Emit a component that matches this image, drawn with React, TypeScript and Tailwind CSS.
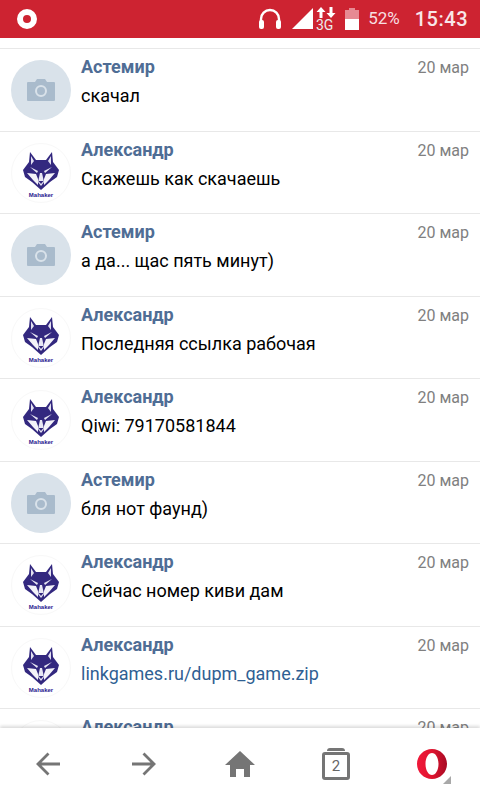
const messages = [
  { name: "Астемир", text: "скачал", wolf: false },
  { name: "Александр", text: "Скажешь как скачаешь", wolf: true },
  { name: "Астемир", text: "а да... щас пять минут)", wolf: false },
  { name: "Александр", text: "Последняя ссылка рабочая", wolf: true },
  { name: "Александр", text: "Qiwi: 79170581844", wolf: true },
  { name: "Астемир", text: "бля нот фаунд)", wolf: false },
  { name: "Александр", text: "Сейчас номер киви дам", wolf: true },
  { name: "Александр", text: "linkgames.ru/dupm_game.zip", wolf: true, link: true },
  { name: "Александр", text: "", wolf: true },
];

const CameraAvatar = () => (
  <div className="w-[60px] h-[60px] rounded-full bg-[#d9e2ea] flex items-center justify-center shrink-0">
    <svg width="30" height="24" viewBox="0 0 30 24">
      <path
        d="M2 4h7l2-3h8l2 3h7a1 1 0 0 1 1 1v17a1 1 0 0 1-1 1H2a1 1 0 0 1-1-1V5a1 1 0 0 1 1-1z"
        fill="#a9bbcc"
      />
      <circle cx="15" cy="13" r="5" fill="none" stroke="#d9e2ea" strokeWidth="2" />
    </svg>
  </div>
);

const WolfAvatar = () => (
  <div className="w-[60px] h-[60px] rounded-full bg-white border border-[#f8f8f8] flex flex-col items-center shrink-0 pt-[8px]">
    <svg width="36" height="38" viewBox="0 0 36 38">
      {/* head */}
      <path d="M7 0l6 8h10l6-8 1 10 6 8-2 7-7 5-9 8-9-8-7-5-2-7 6-8z" fill="#33287f" />
      {/* ears */}
      <path d="M8 4l3 5-3 4zM28 4l-3 5 3 4z" fill="#e2e0f0" />
      {/* brows */}
      <path d="M7 15l8 4-1 2zM29 15l-8 4 1 2z" fill="#e9e8f4" />
      {/* cheeks */}
      <path d="M4 21l9 1 2 5v6l-5-5zM32 21l-9 1-2 5v6l5-5z" fill="#f4f3f9" />
      {/* muzzle */}
      <path d="M17 21h2l2 9-3 4-3-4z" fill="#e9e8f4" />
      <path d="M15.500 29h5l-2.500 3z" fill="#33287f" />
    </svg>
    <span className="text-[6px] leading-[7px] mt-[2px] font-bold text-[#2a2090] font-['Liberation_Sans',sans-serif]">
      Mahaker
    </span>
  </div>
);

const Message = ({ item }: { item: (typeof messages)[number] }) => (
  <div className="h-[82.5px] shrink-0 flex gap-[10px] pl-[11px] pr-[11px] pt-[11px] border-b border-[#e8e8e8]">
    {item.wolf ? <WolfAvatar /> : <CameraAvatar />}
    <div className="flex-1 min-w-0">
      <div className="flex justify-between items-start">
        <span className="text-[18px] leading-[13px] font-bold text-[#4f6d95]">{item.name}</span>
        <span className="text-[16px] leading-[16px] text-[#808080]">20 мар</span>
      </div>
      <p className={`text-[18px] leading-[20px] mt-[10px] ${item.link ? "text-[#2f5f93]" : "text-black"}`}>
        {item.text}
      </p>
    </div>
  </div>
);

export default function App() {
  return (
    <div className="w-[480px] h-[800px] flex flex-col overflow-hidden bg-white font-['Roboto',sans-serif]">
      {/* status bar */}
      <div className="h-[38px] shrink-0 bg-[#cd2331] flex items-center pl-[17px] pr-[12px] text-white">
        <div className="w-[20px] h-[20px] rounded-full border-[6px] border-white" />
        <div className="flex-1" />
        <svg width="24" height="22" viewBox="0 0 24 22" className="mr-[10px]">
          <path d="M3 15v-4a9 9 0 0 1 18 0v4" fill="none" stroke="#fff" strokeWidth="2.4" />
          <rect x="1" y="12" width="5" height="9" rx="2" fill="#fff" />
          <rect x="18" y="12" width="5" height="9" rx="2" fill="#fff" />
        </svg>
        <svg width="22" height="22" viewBox="0 0 22 22">
          <path d="M0 21L21 0v21z" fill="#fff" />
        </svg>
        <svg width="20" height="30" viewBox="0 0 20 30" className="ml-[2px] mr-[9px]">
          <path d="M5 3l4.500 5H6.500v6h-3V8H.5zM15 14l-4.500-5h3V3h3v6h3z" fill="#fff" />
          <text x="0" y="26" fontSize="14" fill="#ececec" fontFamily="Roboto">3G</text>
        </svg>
        <div className="w-[14px] h-[22px] flex flex-col items-center mr-[9px]">
          <div className="w-[6px] h-[2px] bg-[#e68a93]" />
          <div className="w-[14px] h-[9px] bg-[#e68a93]" />
          <div className="w-[14px] h-[11px] bg-white" />
        </div>
        <span className="text-[17px] text-[#f7dfe1] mr-[15px]">52%</span>
        <span className="text-[20px] font-medium tracking-[0.5px] text-[#f8e6e8]">15:43</span>
      </div>

      {/* messages */}
      <div className="flex-1 min-h-0 overflow-hidden flex flex-col">
        <div className="h-[11px] shrink-0 border-b border-[#e8e8e8]" />
        {messages.map((item, i) => (
          <Message key={i} item={item} />
        ))}
      </div>

      {/* bottom nav */}
      <div className="relative h-[72px] shrink-0 bg-white shadow-[0_-2px_3px_rgba(0,0,0,0.14)] grid grid-cols-5 items-center justify-items-center">
        <svg width="26" height="26" viewBox="0 0 26 26">
          <path d="M25 13H3M13.500 2.500L3 13l10.500 10.500" fill="none" stroke="#757575" strokeWidth="2.800" />
        </svg>
        <svg width="26" height="26" viewBox="0 0 26 26">
          <path d="M1 13h22M12.500 2.500L23 13 12.500 23.500" fill="none" stroke="#757575" strokeWidth="2.800" />
        </svg>
        <svg width="30" height="26" viewBox="0 0 30 26">
          <path d="M15 0L30 14h-5v12h-6v-8h-8v8H5V14H0z" fill="#757575" />
        </svg>
        <div className="relative w-[28px] h-[32px]">
          <div className="absolute left-[5px] top-0 w-[18px] h-[3px] rounded-t-sm bg-[#757575]" />
          <div className="absolute left-0 top-[4px] w-[28px] h-[28px] border-[3px] border-[#757575] rounded-[3px] flex items-center justify-center text-[15px] leading-none text-[#666]">
            2
          </div>
        </div>
        <div className="relative w-[30px] h-[30px]">
          <svg width="30" height="30" viewBox="0 0 30 30">
            <defs>
              <linearGradient id="opera" x1="0" x2="1" y1="0" y2="0">
                <stop offset="0" stopColor="#f0193a" />
                <stop offset="0.5" stopColor="#e0142f" />
                <stop offset="1" stopColor="#a70a24" />
              </linearGradient>
            </defs>
            <path
              fillRule="evenodd"
              d="M15 0c8.300 0 15 6.700 15 15s-6.700 15-15 15S0 23.300 0 15 6.700 0 15 0zm0 4c-3.600 0-6.500 4.900-6.500 11s2.900 11 6.500 11 6.500-4.900 6.500-11S18.600 4 15 4z"
              fill="url(#opera)"
            />
          </svg>
          <div className="absolute right-[-4px] bottom-[-5px] w-0 h-0 border-l-[8px] border-l-transparent border-b-[8px] border-b-[#a8a8a8]" />
        </div>
      </div>
    </div>
  );
}
